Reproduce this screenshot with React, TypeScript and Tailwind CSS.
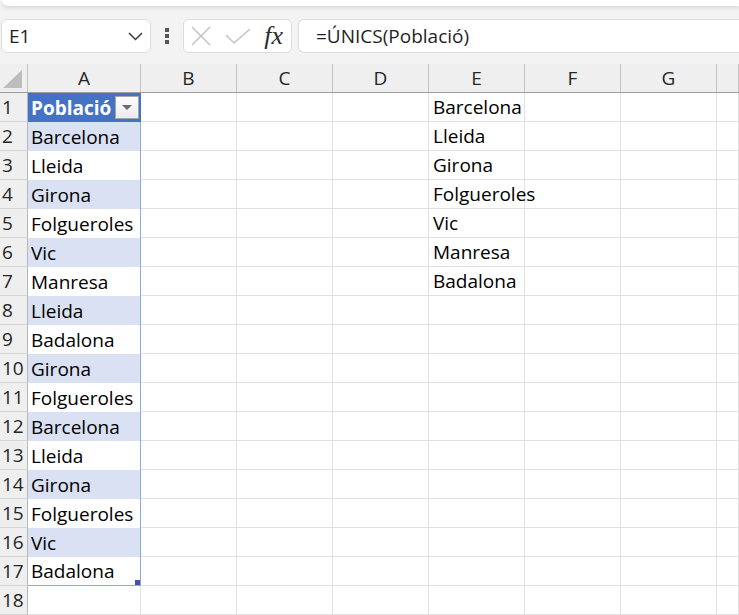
const columns = ["A", "B", "C", "D", "E", "F", "G", "H"];

const towns = [
  "Barcelona",
  "Lleida",
  "Girona",
  "Folgueroles",
  "Vic",
  "Manresa",
  "Lleida",
  "Badalona",
  "Girona",
  "Folgueroles",
  "Barcelona",
  "Lleida",
  "Girona",
  "Folgueroles",
  "Vic",
  "Badalona",
];

const unique = ["Barcelona", "Lleida", "Girona", "Folgueroles", "Vic", "Manresa", "Badalona"];

const FormulaBar = () => (
  <div className="bg-[#f3f3f3]">
    <div className="h-[6px] ml-[2px] bg-white rounded-bl-[8px] shadow-[0_2px_4px_rgba(0,0,0,0.12)]" />
    <div className="flex items-center h-[58px] pt-[3px] pb-[1px]">
      <div className="ml-[1px] w-[150px] h-[34px] bg-white border border-[#dcdcdc] rounded-[6px] flex items-center justify-between pl-[7px] pr-[7px]">
        <span className="text-[19px] text-[#1f1f1f]">E1</span>
        <svg width="15" height="9" viewBox="0 0 15 9">
          <polyline points="1,1 7.5,7.5 14,1" fill="none" stroke="#3a3a3a" strokeWidth="1.5" />
        </svg>
      </div>
      <div className="w-[32px] flex flex-col items-center gap-[2px]">
        <span className="w-[4px] h-[4px] bg-[#555]" />
        <span className="w-[4px] h-[4px] bg-[#555]" />
        <span className="w-[4px] h-[4px] bg-[#555]" />
      </div>
      <div className="w-[109px] h-[34px] bg-white border border-[#dcdcdc] rounded-[6px] flex items-center pl-[6px] pr-[6px]">
        <svg width="22" height="20" viewBox="0 0 22 20">
          <line x1="2" y1="1" x2="20" y2="19" stroke="#c4c4c4" strokeWidth="1.6" />
          <line x1="20" y1="1" x2="2" y2="19" stroke="#c4c4c4" strokeWidth="1.6" />
        </svg>
        <svg width="26" height="17" viewBox="0 0 26 17" className="ml-[13px]">
          <polyline points="1,7 9,15 25,1" fill="none" stroke="#c4c4c4" strokeWidth="1.6" />
        </svg>
        <span className="ml-auto mr-[2px] text-[26px] italic text-[#2b2b2b] font-['Liberation_Serif',serif] leading-none">
          fx
        </span>
      </div>
      <div className="ml-[6px] flex-1 h-[34px] bg-white border border-[#dcdcdc] border-r-0 rounded-l-[6px] flex items-center pl-[17px]">
        <span className="text-[19px] text-[#1f1f1f]">=ÚNICS(Població)</span>
      </div>
    </div>
  </div>
);

const Header = () => (
  <div className="flex h-[29px] bg-[#efefef] border-b border-[#9e9e9e]">
    <div className="w-[28px] shrink-0 border-r border-[#c4c4c4] relative">
      <svg width="24" height="22" className="absolute right-[3px] bottom-[2px]">
        <polygon points="22,2 22,20 3,20" fill="#bdbdbd" />
      </svg>
    </div>
    {columns.map((c, i) => (
      <div
        key={c}
        className={`${i === 0 ? "w-[113px]" : i === 7 ? "w-[22px]" : "w-[96px]"} shrink-0 border-r border-[#c4c4c4] flex items-center justify-center text-[19px] text-[#262626]`}
      >
        {i === 7 ? "" : c}
      </div>
    ))}
  </div>
);

const Row = ({ n }: { n: number }) => {
  const inTable = n <= 17;
  const banded = n > 1 && n <= 17 && n % 2 === 0;
  const a = n === 1 ? "Població" : inTable ? towns[n - 2] : "";
  const e = unique[n - 1] ?? "";
  return (
    <div className="flex h-[29px]">
      <div className="w-[28px] shrink-0 bg-[#efefef] border-r border-b border-r-[#b8b8b8] border-b-[#d4d4d4] flex items-center pl-[2px] pt-[1px] text-[19px] text-[#262626] leading-none">
        {n}
      </div>
      <div
        className={`w-[113px] shrink-0 flex items-center pl-[3px] pt-[1px] text-[19px] relative ${
          n === 1
            ? "bg-[#4472c4] text-white font-bold border-r border-r-[#4472c4]"
            : banded
            ? "bg-[#d9e1f2] text-black border-r border-r-[#8ea9db]"
            : inTable
            ? "bg-white text-black border-r border-r-[#8ea9db]"
            : "bg-white border-r border-b border-[#e1e1e1]"
        } ${n === 17 ? "border-b border-b-[#8ea9db]" : ""}`}
      >
        {a}
        {n === 1 && (
          <div className="absolute right-[1px] top-[3px] w-[24px] h-[23px] bg-gradient-to-b from-[#fdfdfd] to-[#ececec] border border-[#a6a6a6] flex items-center justify-center">
            <svg width="10" height="6">
              <polygon points="0,0 10,0 5,5" fill="#6b6b6b" />
            </svg>
          </div>
        )}
        {n === 17 && <div className="absolute right-[0px] bottom-[0px] w-[5px] h-[5px] bg-[#3d52b1]" />}
      </div>
      {columns.slice(1).map((c, i) => (
        <div
          key={c}
          className={`${i === 6 ? "w-[22px]" : "w-[96px]"} shrink-0 border-r border-b border-[#e1e1e1] flex items-center pl-[4px] pt-[1px] text-[19px] text-black whitespace-nowrap`}
        >
          {c === "E" ? e : ""}
        </div>
      ))}
    </div>
  );
};

export default function App() {
  return (
    <div className="w-[739px] h-[615px] overflow-hidden bg-white font-['Open_Sans',sans-serif]">
      <FormulaBar />
      <Header />
      {Array.from({ length: 18 }, (_, i) => (
        <Row key={i} n={i + 1} />
      ))}
    </div>
  );
}
